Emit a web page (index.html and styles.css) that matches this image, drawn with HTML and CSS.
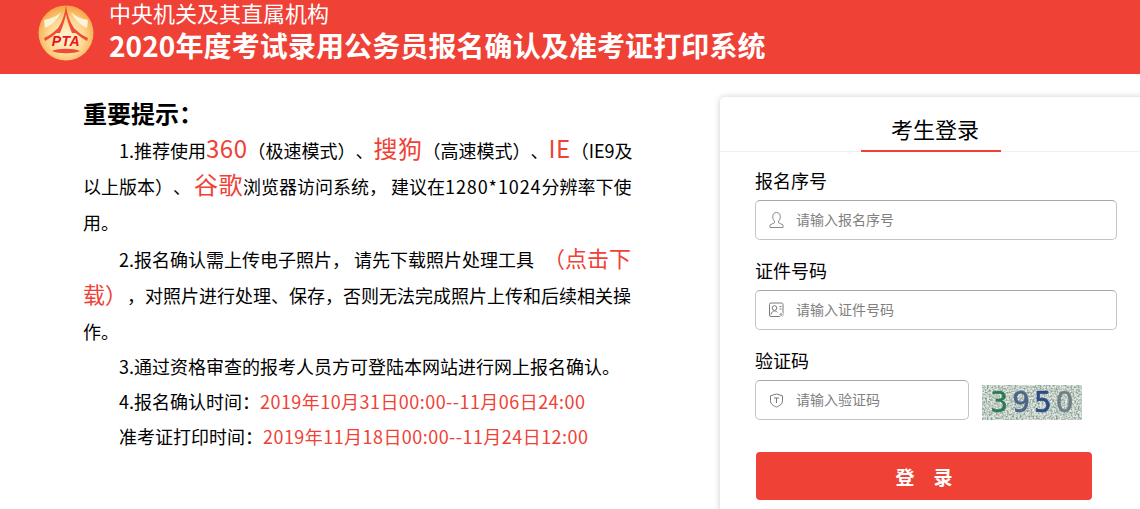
FILE: index.html
```html
<!DOCTYPE html>
<html lang="zh-CN">

<head>
  <meta charset="UTF-8">
  <title>2020年度考试录用公务员报名确认及准考证打印系统</title>
  <link rel="stylesheet" href="styles.css">
</head>

<body>

  <!-- Header -->
  <div class="header">
    <svg class="logo" width="56" height="56" viewBox="0 0 56 56">
      <defs>
        <radialGradient id="logoBg" cx="50%" cy="58%" r="55%">
          <stop offset="0" stop-color="#fff6dc" />
          <stop offset="0.6" stop-color="#fdd890" />
          <stop offset="1" stop-color="#f8a84c" />
        </radialGradient>
      </defs>
      <circle cx="28" cy="28" r="27.5" fill="url(#logoBg)" />
      <path d="M28 0 C27 10 23 21 16 28 L22 28 C25 21 27 14 28 9 C29 14 31 21 34 28 L40 28 C33 21 29 10 28 0 Z" fill="#f04a38" />
      <path d="M6 15 C12 14 18 12 23 7 C20 14 14 20 7 23 Z" fill="#fbf2dc" />
      <path d="M50 15 C44 14 38 12 33 7 C36 14 42 20 49 23 Z" fill="#fbf2dc" />
      <path d="M6 33 C11 31 15 28 19 24 L21 25 C17 30 12 33 7 36 Z" fill="#f04a38" />
      <path d="M50 33 C45 31 41 28 37 24 L35 25 C39 30 44 33 49 36 Z" fill="#f04a38" />
      <path d="M14 46 C20 43 36 43 42 46 C36 49 20 49 14 46 Z" fill="#f04a38" />
      <text class="logo-text" x="28" y="40.500" text-anchor="middle">PTA</text>
    </svg>
    <div class="header-text">
      <div class="header-sub">中央机关及其直属机构</div>
      <div class="header-title">2020年度考试录用公务员报名确认及准考证打印系统</div>
    </div>
  </div>

  <div class="main">
    <!-- Notice -->
    <div class="notice">
      <h2>重要提示：</h2>
      <p>1.推荐使用<span class="hl">360</span>（极速模式）、<span class="hl">搜狗</span>（高速模式）、<span class="hl">IE</span>（IE9及以上版本）、<span class="hl hl-gap">谷歌</span>浏览器访问系统， 建议在<span class="num">1280*1024</span>分辨率下使用。</p>
      <p>2.报名确认需上传电子照片， 请先下载照片处理工具<a class="link" href="#">（点击下载）</a>，对照片进行处理、保存，否则无法完成照片上传和后续相关操作。</p>
      <p class="tight">3.通过资格审查的报考人员方可登陆本网站进行网上报名确认。</p>
      <p class="tight">4.报名确认时间：<span class="time">2019年10月31日00:00--11月06日24:00</span></p>
      <p class="tight">准考证打印时间：<span class="time">2019年11月18日00:00--11月24日12:00</span></p>
    </div>

    <!-- Login -->
    <div class="login-card">
      <div class="login-tab"><span>考生登录</span></div>
      <form class="login-form">
        <label>报名序号</label>
        <div class="input-box">
          <svg class="input-icon" width="16" height="18" viewBox="0 0 16 18" fill="none" stroke="#8a8a8a">
            <path d="M8 1.500c-2.400 0-3.800 1.800-3.800 4.200 0 1.900.7 3.300 1.800 4.300v1.700L1.500 14v2.500h13V14L10 11.700V10c1.100-1 1.800-2.400 1.800-4.300C11.800 3.300 10.400 1.500 8 1.500z" />
          </svg>
          <input type="text" placeholder="请输入报名序号">
        </div>

        <label>证件号码</label>
        <div class="input-box">
          <svg class="input-icon" width="16" height="16" viewBox="0 0 16 16" fill="none" stroke="#7a7a7a">
            <rect x="1" y="1" width="13.500" height="13.500" rx="1.500" />
            <circle cx="6" cy="6" r="2.300" />
            <path d="M2.500 12.500c.5-2.500 2-3.500 3.500-3.500s2.500.6 3 1.500" />
            <path d="M11 4.500h2M11 7h2" />
            <circle cx="12.500" cy="12.500" r="2" fill="#aaa" stroke="#fff" />
          </svg>
          <input type="text" placeholder="请输入证件号码">
        </div>

        <label>验证码</label>
        <div class="captcha-row">
          <div class="input-box captcha-input">
            <svg class="input-icon" width="14" height="15" viewBox="0 0 14 15" fill="none" stroke="#7a7a7a">
              <path d="M7 1l6 1.800v5C13 11 10 13 7 14 4 13 1 11 1 7.800v-5z" />
              <path d="M4.500 5h5M7 5v5" />
            </svg>
            <input type="text" placeholder="请输入验证码">
          </div>
          <div class="captcha">
            <svg class="captcha-noise" width="100" height="35">
              <filter id="noise" color-interpolation-filters="sRGB">
                <feTurbulence type="fractalNoise" baseFrequency="0.55" numOctaves="2" seed="4" />
                <feColorMatrix values="0 0 0 0 0.52  0 0 0 0 0.6  0 0 0 0 0.55  2.400 0 0 0 -0.85" />
              </filter>
              <rect width="100" height="35" fill="#e2e9e4" />
              <rect width="100" height="35" filter="url(#noise)" />
            </svg>
            <span class="c1">3</span><span class="c2">9</span><span class="c3">5</span><span class="c4">0</span>
          </div>
        </div>

        <button type="button" class="btn-login">登　录</button>
      </form>
    </div>
  </div>

</body>

</html>
```

FILE: styles.css
```css
html,
body {
  height: 100%;
  margin: 0;
  overflow: hidden;
}

body {
  font-family: "Noto Sans CJK SC", "Liberation Sans", sans-serif;
  background: #fff;
  color: #000;
  text-spacing-trim: space-all;
}

/* Header */
.header {
  height: 74px;
  background: #f04136;
  color: #fff;
  display: flex;
  padding: 5px 0 0 38px;
  box-sizing: border-box;
}

.logo {
  flex: none;
}

.logo-text {
  font-family: "Liberation Sans", sans-serif;
  font-size: 14px;
  font-weight: bold;
  font-style: italic;
  fill: #e8141c;
  letter-spacing: 0.5px;
}

.header-text {
  margin: -5px 0 0 15px;
}

.header-sub {
  font-size: 22px;
  line-height: 25px;
}

.header-title {
  font-size: 28px;
  line-height: 42px;
  margin-top: -1px;
  font-weight: bold;
  letter-spacing: 0.1px;
}

/* Layout */
.main {
  display: flex;
  align-items: flex-start;
  padding-top: 23px;
}

/* Notice */
.notice {
  width: 552px;
  margin-left: 83px;
  flex: none;
}

.notice h2 {
  font-size: 24px;
  line-height: 32px;
  margin: 0 0 3px;
}

.notice p {
  font-size: 18px;
  line-height: 36.200px;
  margin: 0;
  text-indent: 36px;
}

.notice p.tight {
  line-height: 34.800px;
}

.hl {
  font-size: 24px;
  line-height: 1;
  letter-spacing: 0.5px;
  color: #f04136;
}

.hl-gap {
  margin-left: 3px;
}

.link {
  font-size: 22px;
  line-height: 1;
  margin-left: 9px;
  color: #f04136;
  text-decoration: none;
}

.num {
  letter-spacing: 0.9px;
}

.time {
  color: #f04136;
  letter-spacing: 0.45px;
}

/* Login */
.login-card {
  flex: none;
  width: 430px;
  height: 430px;
  margin-left: 85px;
  border-radius: 5px;
  box-shadow: 0 0 6px rgba(0, 0, 0, 0.2);
}

.login-tab {
  height: 54px;
  border-bottom: 1px solid #f0f0f0;
  text-align: center;
  margin-right: 8px;
}

.login-tab span {
  display: inline-block;
  width: 140px;
  height: 55px;
  padding-left: 8px;
  line-height: 63px;
  font-size: 22px;
  border-bottom: 2px solid #f04136;
  box-sizing: border-box;
}

.login-form {
  padding: 14px 0 0 35px;
}

.login-form label {
  display: block;
  font-size: 18px;
  line-height: 28px;
  margin-bottom: 6px;
}

.input-box {
  width: 362px;
  height: 40px;
  box-sizing: border-box;
  border: 1px solid #c4c4c4;
  border-top-color: #a8a8a8;
  border-radius: 5px;
  display: flex;
  align-items: center;
  padding-left: 12px;
  margin-bottom: 16px;
}

.input-icon {
  flex: none;
  width: 17px;
}

.input-box input {
  border: none;
  outline: none;
  margin: 0 0 2px 11px;
  padding: 0;
  flex: 1;
  min-width: 0;
  font-family: inherit;
  font-size: 14px;
}

.input-box input::placeholder {
  color: #808080;
}

.captcha-row {
  display: flex;
  align-items: flex-start;
}

.captcha-input {
  width: 214px;
  margin-bottom: 0;
}

.captcha {
  position: relative;
  width: 100px;
  height: 35px;
  margin: 5px 0 0 13px;
  display: flex;
  justify-content: center;
  gap: 4px;
  line-height: 35px;
  font-family: "DejaVu Sans", sans-serif;
  font-size: 28px;
}

/* noise sits under the digits */
.captcha-noise {
  position: absolute;
  top: 0;
  left: 0;
}

.captcha span {
  position: relative;
  -webkit-text-stroke: 0.6px currentColor;
  filter: blur(0.6px);
}

.c1 { color: #2c7a52; }
.c2 { color: #4b6487; }
.c3 { color: #2c4a86; }
.c4 { color: #6f7d85; }

.btn-login {
  display: block;
  width: 336px;
  height: 48px;
  margin: 32px 0 0 1px;
  border: none;
  border-radius: 4px;
  background: #f04136;
  color: #fff;
  font-family: inherit;
  font-size: 19px;
  font-weight: bold;
}
```
